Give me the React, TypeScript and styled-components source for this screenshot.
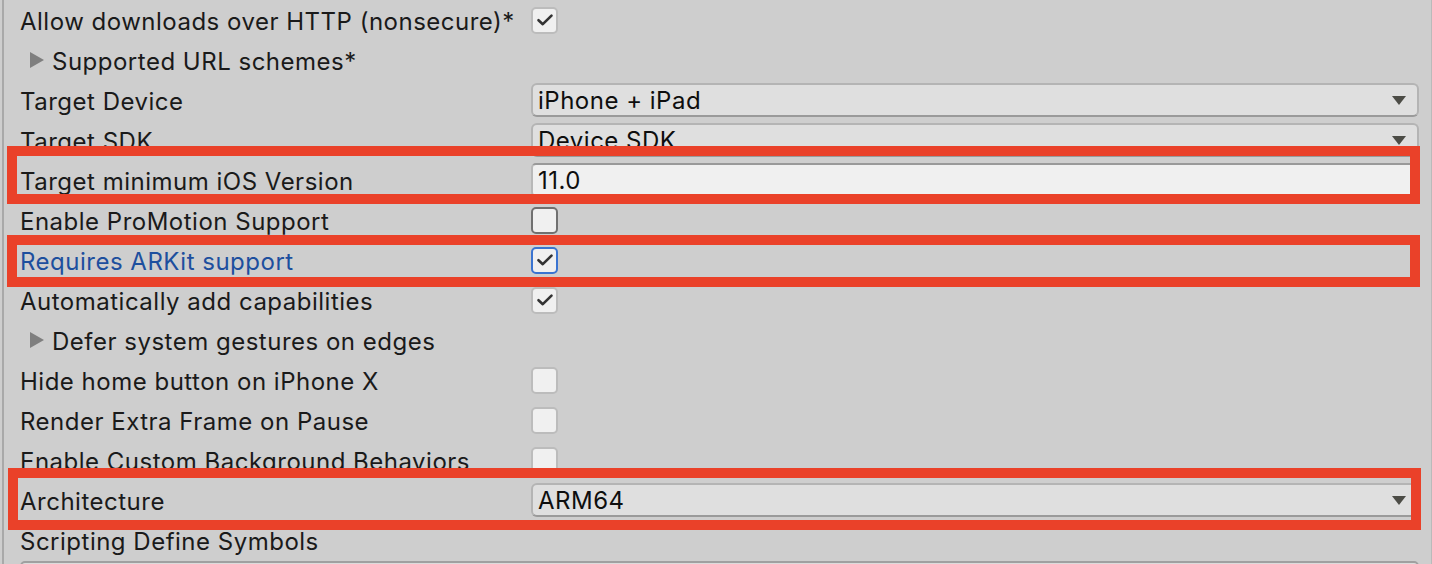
import React from 'react'
import styled, { createGlobalStyle } from 'styled-components'

const GlobalStyle = createGlobalStyle`
  html, body {
    margin: 0;
    padding: 0;
    background: #cecece;
    overflow: hidden;
  }
  * {
    box-sizing: border-box;
  }
`

type FieldKind =
  | { type: 'check'; checked: boolean; state?: 'focus' | 'hover' }
  | { type: 'dropdown'; value: string }
  | { type: 'text'; value: string }
  | { type: 'none' }

type Row = {
  label: string
  foldout?: boolean
  blue?: boolean
  field: FieldKind
}

const rows: Row[] = [
  { label: 'Allow downloads over HTTP (nonsecure)*', field: { type: 'check', checked: true } },
  { label: 'Supported URL schemes*', foldout: true, field: { type: 'none' } },
  { label: 'Target Device', field: { type: 'dropdown', value: 'iPhone + iPad' } },
  { label: 'Target SDK', field: { type: 'dropdown', value: 'Device SDK' } },
  { label: 'Target minimum iOS Version', field: { type: 'text', value: '11.0' } },
  { label: 'Enable ProMotion Support', field: { type: 'check', checked: false, state: 'hover' } },
  { label: 'Requires ARKit support', blue: true, field: { type: 'check', checked: true, state: 'focus' } },
  { label: 'Automatically add capabilities', field: { type: 'check', checked: true } },
  { label: 'Defer system gestures on edges', foldout: true, field: { type: 'none' } },
  { label: 'Hide home button on iPhone X', field: { type: 'check', checked: false } },
  { label: 'Render Extra Frame on Pause', field: { type: 'check', checked: false } },
  { label: 'Enable Custom Background Behaviors', field: { type: 'check', checked: false } },
  { label: 'Architecture', field: { type: 'dropdown', value: 'ARM64' } },
  { label: 'Scripting Define Symbols', field: { type: 'none' } },
]

// annotation boxes drawn over the inspector (page coordinates)
const highlights = [
  { left: 7, top: 146, width: 1413, height: 58 },
  { left: 7, top: 235, width: 1413, height: 52 },
  { left: 8, top: 468, width: 1413, height: 62 },
]

// inspector padding box starts at x = 4 (2px margin + 2px border)
const ORIGIN_X = 4

export default function App(): JSX.Element {
  return (
    <>
      <GlobalStyle />
      <Inspector>
        {rows.map((row) => (
          <PropertyRow key={row.label}>
            <Label $blue={row.blue} $foldout={row.foldout}>
              {row.foldout && <Foldout />}
              {row.label}
            </Label>
            <FieldCell>{renderField(row.field)}</FieldCell>
          </PropertyRow>
        ))}
        <DefinesField />
        {highlights.map((h, i) => (
          <Highlight
            key={i}
            style={{ left: h.left - ORIGIN_X, top: h.top, width: h.width, height: h.height }}
          />
        ))}
      </Inspector>
    </>
  )
}

function renderField(field: FieldKind) {
  switch (field.type) {
    case 'check':
      return (
        <Checkbox $state={field.state}>
          {field.checked && (
            <svg width="18" height="14" viewBox="0 0 18 14">
              <path d="M2.5 7.2 L6.8 11.2 L15.5 2.6" fill="none" stroke="#333" strokeWidth="2.6" strokeLinecap="round" strokeLinejoin="round" />
            </svg>
          )}
        </Checkbox>
      )
    case 'dropdown':
      return (
        <Dropdown>
          <span>{field.value}</span>
          <Arrow />
        </Dropdown>
      )
    case 'text':
      return <TextField>{field.value}</TextField>
    default:
      return null
  }
}

const Inspector = styled.div`
  position: relative;
  width: 1430px;
  height: 564px;
  overflow: hidden;
  background: #cecece;
  border-left: 2px solid #a9a9a9;
  border-right: 1px solid #bababa;
  margin-left: 2px;
  padding: 0 12px 0 16px;
  font-family: Inter, 'Noto Sans', sans-serif;
  color: #1a1a1a;
`

const PropertyRow = styled.div`
  display: grid;
  grid-template-columns: 511px 1fr;
  align-items: center;
  height: 40px;
`

const Label = styled.div<{ $blue?: boolean; $foldout?: boolean }>`
  display: flex;
  align-items: center;
  padding-left: ${(p) => (p.$foldout ? '10px' : '0')};
  padding-top: 2px;
  font-size: 24px;
  letter-spacing: 0.5px;
  white-space: nowrap;
  color: ${(p) => (p.$blue ? '#1d4f9e' : '#1a1a1a')};
`

const Foldout = styled.span`
  width: 0;
  height: 0;
  margin-right: 8px;
  margin-top: -2px;
  border-top: 8px solid transparent;
  border-bottom: 8px solid transparent;
  border-left: 14px solid #7f7f7f;
`

const FieldCell = styled.div`
  display: flex;
  align-items: center;
  height: 100%;
`

const Checkbox = styled.div<{ $state?: 'focus' | 'hover' }>`
  width: 27px;
  height: 27px;
  border-radius: 5px;
  background: #f0f0f0;
  display: flex;
  align-items: center;
  justify-content: center;
  border: 2px solid
    ${(p) => (p.$state === 'focus' ? '#3a74d1' : p.$state === 'hover' ? '#707070' : '#bcbcbc')};
`

const Dropdown = styled.div`
  flex: 1;
  height: 34px;
  display: flex;
  align-items: center;
  justify-content: space-between;
  padding: 1px 11px 0 5px;
  background: #dfdfdf;
  border: 2px solid #b4b4b4;
  border-bottom-color: #9a9a9a;
  border-radius: 6px;
  font-size: 24px;
  letter-spacing: 0.5px;
  color: #0e0e0e;
`

const Arrow = styled.span`
  width: 0;
  height: 0;
  border-left: 7px solid transparent;
  border-right: 7px solid transparent;
  border-top: 9px solid #4c4c46;
`

const TextField = styled.div`
  flex: 1;
  height: 34px;
  display: flex;
  align-items: center;
  padding: 1px 5px 0;
  background: #f0f0f0;
  border: 2px solid #b8b8b8;
  border-top-color: #999999;
  border-radius: 5px;
  font-size: 24px;
  letter-spacing: 0.5px;
  color: #0e0e0e;
`

const DefinesField = styled.div`
  height: 34px;
  margin-top: 1px;
  background: #dcdcdc;
  border: 2px solid #a0a0a0;
  border-radius: 5px;
`

const Highlight = styled.div`
  position: absolute;
  border: 10px solid #ea4129;
  pointer-events: none;
`
